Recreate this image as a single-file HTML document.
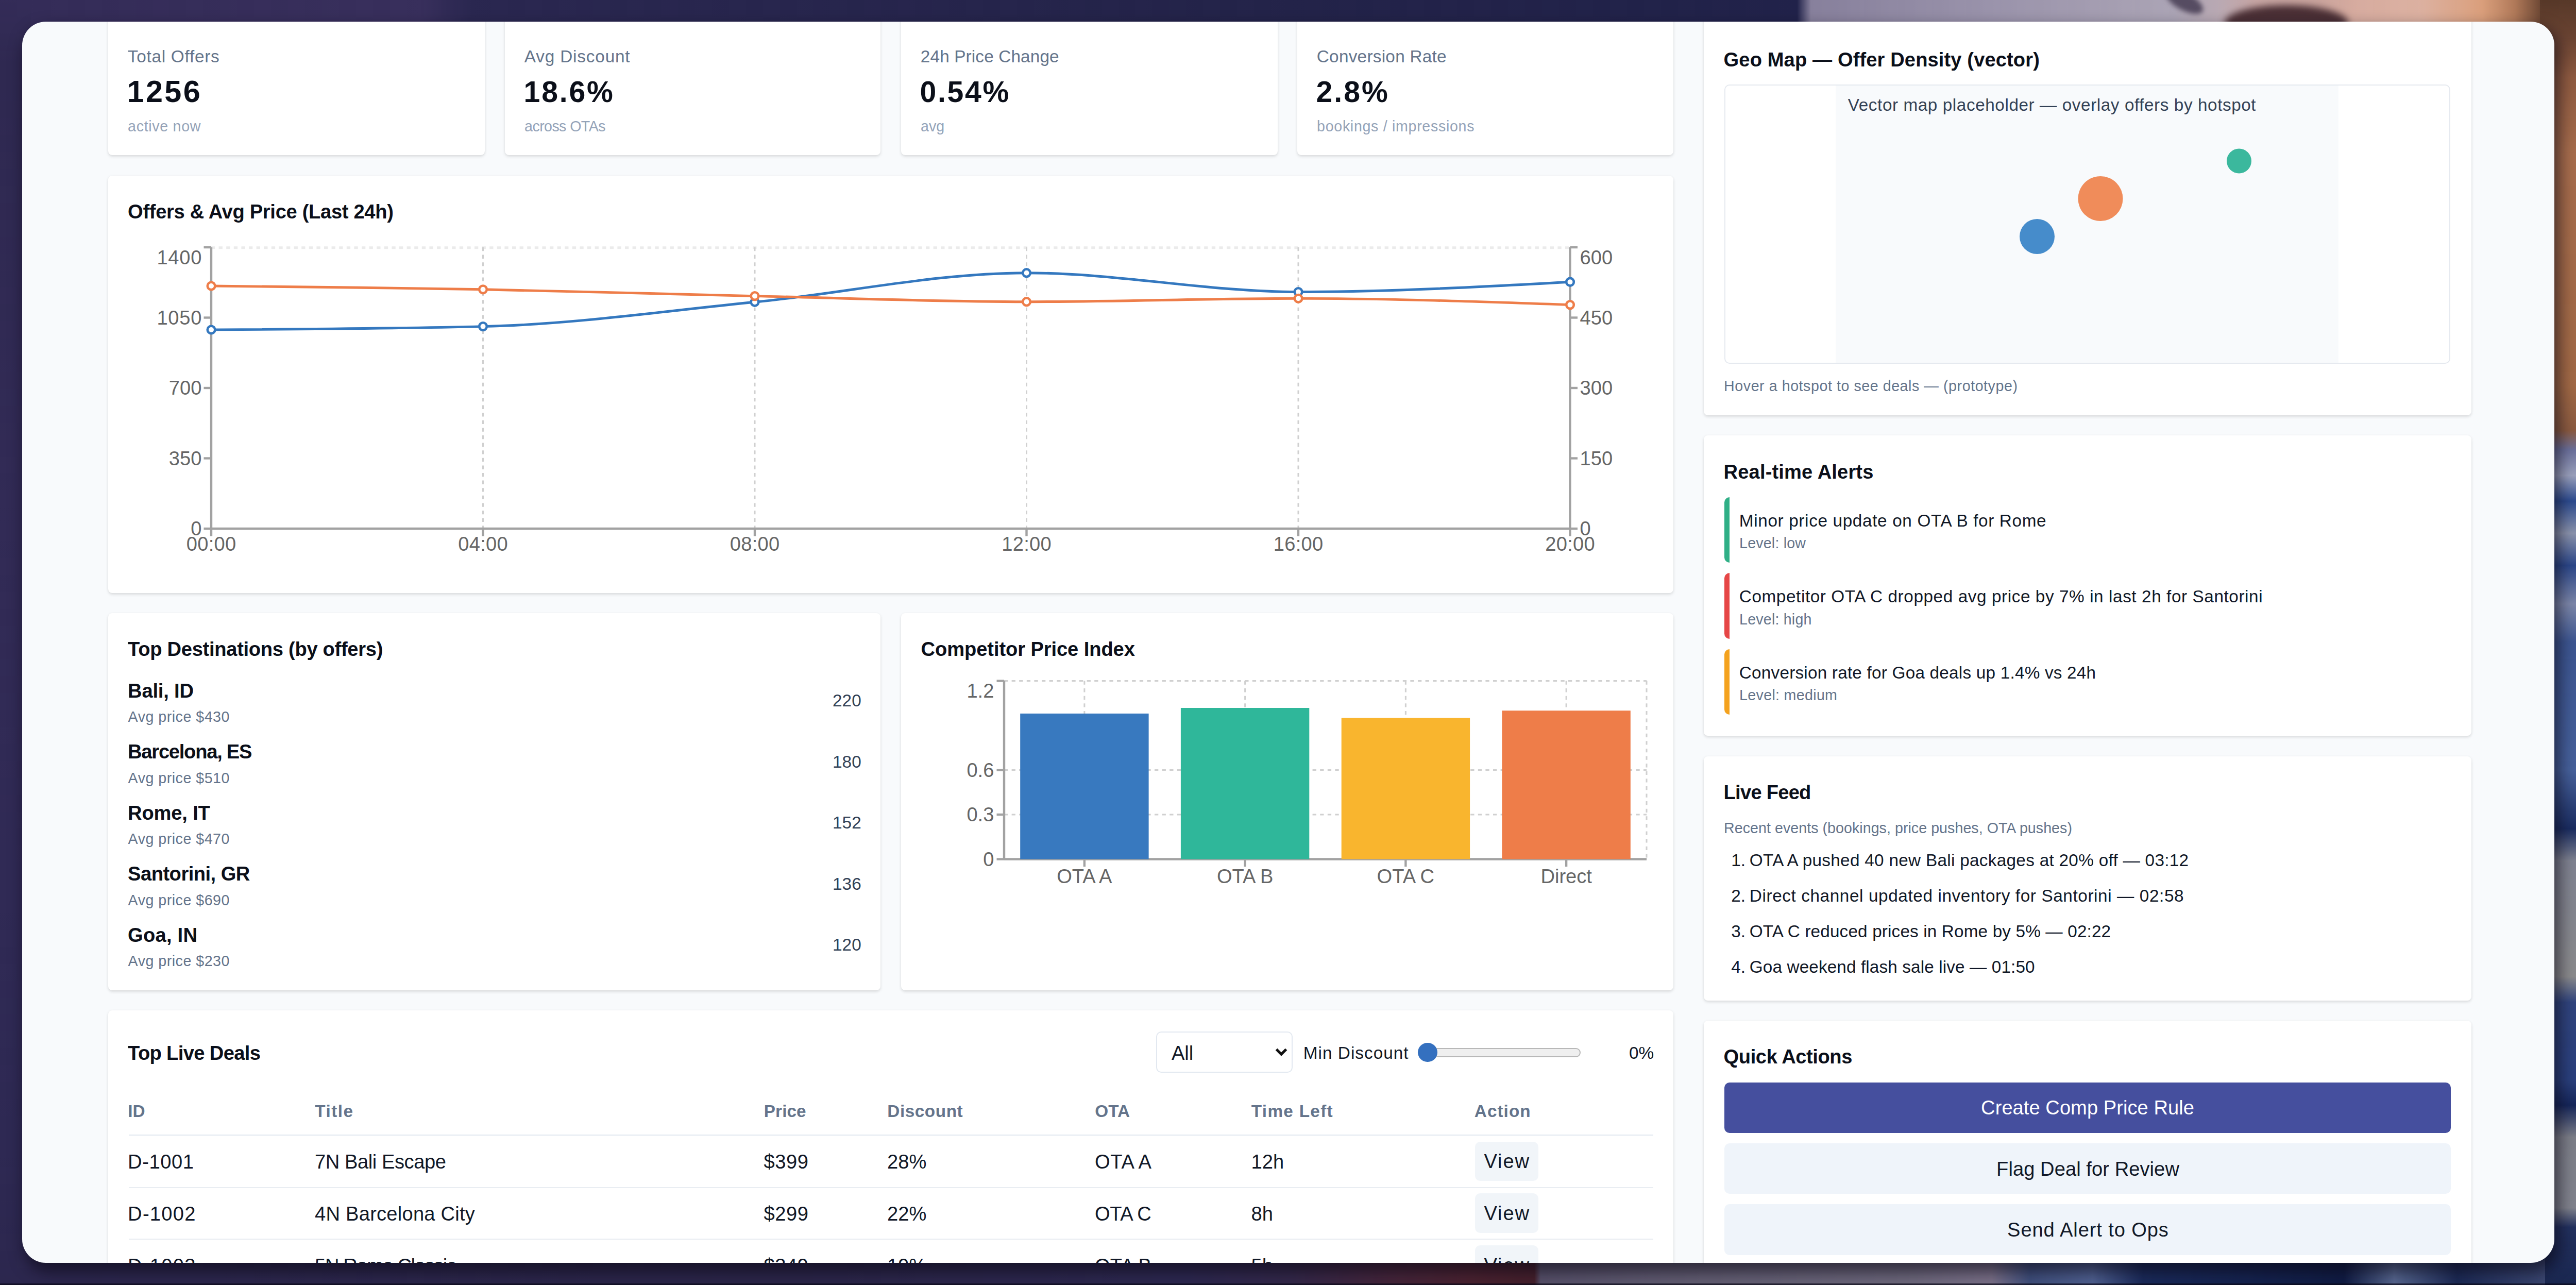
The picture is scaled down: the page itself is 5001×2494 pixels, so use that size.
<!DOCTYPE html>
<html lang="en"><head><meta charset="utf-8"><title>Travel Deals Dashboard</title>
<style>
html,body{margin:0;padding:0}
body{width:5001px;height:2494px;overflow:hidden;position:relative;background:#2b2750;font-family:"Liberation Sans",sans-serif}
.s{position:absolute}
.panel{position:absolute;left:43px;top:42px;width:4915px;height:2409px;border-radius:46px;background:#f8fafc;overflow:hidden;box-shadow:7px 15px 30px 2px rgba(10,6,20,.62)}
.in{position:absolute;left:-43px;top:-42px;width:5001px;height:2494px}
.card{position:absolute;background:#fff;border-radius:8px;box-shadow:0 2.4px 6px rgba(0,0,0,.09),0 2px 4px rgba(0,0,0,.05)}
.t{position:absolute;white-space:pre;line-height:1}
svg.ov{position:absolute;left:0;top:0}
.g{stroke:#d0d0d0;stroke-width:3;stroke-dasharray:7.3 7.3;fill:none}
.gt{stroke:#ebebeb;stroke-width:5;stroke-dasharray:7.3 7.3;fill:none}
.a{stroke:#a2a2a2;stroke-width:4.4;fill:none}
.mapbox{position:absolute;box-sizing:border-box;border:2.4px solid #e5e9ef;border-radius:10px;background:#fff;overflow:hidden}
.abar{position:absolute;width:10px;height:127.5px;border-radius:10px 0 0 10px}
.btn{position:absolute;border-radius:10px}
.btn2{position:absolute;border-radius:10px;background:#f1f5f9}
.sel{position:absolute;box-sizing:border-box;border:2.4px solid #e2e8f0;border-radius:10px;background:#fff}
.track{position:absolute;box-sizing:border-box;border:2.4px solid #b8b8b8;border-radius:10px;background:#efefef}
.thumb{position:absolute;border-radius:50%;background:#3470bf}
.hl{position:absolute}
</style></head>
<body>

<div class="s" style="left:0;top:0;width:70px;height:2494px;background:linear-gradient(180deg,#342c58 0,#2f2951 5%,#322b56 40%,#302a55 70%,#2e2953 90%,#2c274e 100%)"></div>
<div class="s" style="left:60px;top:0;width:4880px;height:60px;background:linear-gradient(90deg,#342c58 0,#382f5c 15.5%,#2a2750 17.5%,#232349 50%,#21224a 70.25%,#87809c 70.8%,#9a93ab 78%,#aba4b5 85.2%,#b9a9b3 87%,#c6a5a3 88.5%,#c9a39c 91%,#d6ab9f 92.4%,#dcb1a1 95%,#da9f7c 97.5%,#b07959 98.8%,#623f2e 100%)"></div>
<div class="s" style="left:4318px;top:10px;width:240px;height:70px;border-radius:50%;background:#4a2f35;filter:blur(7px)"></div>
<div class="s" style="left:4200px;top:-14px;width:80px;height:34px;border-radius:50%;background:#564c62;filter:blur(5px);transform:rotate(28deg)"></div>
<div class="s" style="left:4930px;top:0;width:71px;height:2494px;background:linear-gradient(180deg,#573828 0,#6b4433 3%,#8e5a40 6%,#a66c4c 12%,#a06845 30%,#8a5a40 33.5%,#6a6f9a 35%,#9aa0bc 37%,#2c4a8e 39%,#8b93ac 41.5%,#2b4688 44%,#7c86a8 47%,#3c5590 50%,#46609a 60%,#1a2c60 64.5%,#7f8290 67%,#8a8a8c 76%,#30447d 78%,#2a3f7c 84%,#16265a 86%,#7c7e88 88.5%,#80828c 94%,#22305e 95.5%,#1a2750 100%)"></div>
<div class="s" style="left:60px;top:2430px;width:4880px;height:64px;background:linear-gradient(90deg,#2c274e 0,#2b2649 30%,#2d2850 45.9%,#33284a 50%,#45253a 54.1%,#4a2230 57.2%,#45202c 59.8%,#57516a 60.05%,#625d72 66%,#6d687c 74.6%,#7a7088 78%,#3f4f7c 79.5%,#4f6090 82%,#1a2a5a 84%,#101c44 92%,#56668f 94%,#1c2a55 96.5%,#3a4670 100%)"></div>
<div class="s" style="left:0;top:2491px;width:5001px;height:3px;background:rgba(10,8,24,.7)"></div>
<div class="panel"><div class="in">
<div class="card" style="left:210px;top:-20px;width:731px;height:321px"></div>
<div class="card" style="left:980px;top:-20px;width:729px;height:321px"></div>
<div class="card" style="left:1749px;top:-20px;width:731px;height:321px"></div>
<div class="card" style="left:2518px;top:-20px;width:730px;height:321px"></div>
<div class="card" style="left:210px;top:341px;width:3038px;height:810px"></div>
<div class="card" style="left:210px;top:1190px;width:1499px;height:732px"></div>
<div class="card" style="left:1749px;top:1190px;width:1499px;height:732px"></div>
<div class="card" style="left:210px;top:1961px;width:3038px;height:639px"></div>
<div class="card" style="left:3307px;top:-20px;width:1490px;height:825.5px"></div>
<div class="card" style="left:3307px;top:844.5px;width:1490px;height:583.5px"></div>
<div class="card" style="left:3307px;top:1468px;width:1490px;height:474px"></div>
<div class="card" style="left:3307px;top:1981px;width:1490px;height:619px"></div>
<div class="mapbox" style="left:3347px;top:164px;width:1409px;height:541.5px"><div style="position:absolute;left:214px;top:0;width:976px;height:100%;background:#f8fafc"></div></div>
<div class="abar" style="left:3347px;top:964.5px;background:#2faf86"></div>
<div class="abar" style="left:3347px;top:1112.0px;background:#e64646"></div>
<div class="abar" style="left:3347px;top:1259.5px;background:#f4a21e"></div>
<div class="btn" style="left:3347px;top:2100.5px;width:1409.5px;height:98px;background:#454f9e"></div>
<div class="btn" style="left:3347px;top:2218.5px;width:1409.5px;height:98.5px;background:#eff4fa"></div>
<div class="btn" style="left:3347px;top:2337px;width:1409.5px;height:98.5px;background:#eff4fa"></div>
<div class="sel" style="left:2244px;top:2002px;width:265px;height:79.5px"></div>
<div class="track" style="left:2752px;top:2033.5px;width:316px;height:18.6px"></div>
<div class="thumb" style="left:2752px;top:2023.8px;width:37.7px;height:37.7px"></div>
<div class="hl" style="left:250px;top:2201.8px;width:2958.5px;height:2.5px;background:#e2e8f0"></div>
<div class="btn2" style="left:2862.5px;top:2215.5px;width:123.5px;height:76.5px"></div>
<div class="hl" style="left:250px;top:2303.5px;width:2958.5px;height:2px;background:#e9edf2"></div>
<div class="btn2" style="left:2862.5px;top:2316.2px;width:123.5px;height:76.5px"></div>
<div class="hl" style="left:250px;top:2404.2px;width:2958.5px;height:2px;background:#e9edf2"></div>
<div class="btn2" style="left:2862.5px;top:2416.9px;width:123.5px;height:76.5px"></div>
<div class="hl" style="left:250px;top:2504.9px;width:2958.5px;height:2px;background:#e9edf2"></div>
<svg class="ov" width="5001" height="2494" viewBox="0 0 5001 2494">
<line x1="410" y1="480.8" x2="3047.5" y2="480.8" class="gt"/>
<line x1="410.0" y1="480" x2="410.0" y2="1026" class="g"/>
<line x1="937.5" y1="480" x2="937.5" y2="1026" class="g"/>
<line x1="1465.0" y1="480" x2="1465.0" y2="1026" class="g"/>
<line x1="1992.5" y1="480" x2="1992.5" y2="1026" class="g"/>
<line x1="2520.0" y1="480" x2="2520.0" y2="1026" class="g"/>
<line x1="3047.5" y1="480" x2="3047.5" y2="1026" class="g"/>
<line x1="410" y1="1026" x2="3047.5" y2="1026" class="g"/>
<line x1="410" y1="480" x2="410" y2="1026" class="a"/>
<line x1="3047.5" y1="480" x2="3047.5" y2="1026" class="a"/>
<line x1="410" y1="1026" x2="3047.5" y2="1026" class="a"/>
<line x1="395.5" y1="480.0" x2="410" y2="480.0" class="a"/>
<line x1="3047.5" y1="480.0" x2="3062.0" y2="480.0" class="a"/>
<line x1="395.5" y1="616.5" x2="410" y2="616.5" class="a"/>
<line x1="3047.5" y1="616.5" x2="3062.0" y2="616.5" class="a"/>
<line x1="395.5" y1="753.0" x2="410" y2="753.0" class="a"/>
<line x1="3047.5" y1="753.0" x2="3062.0" y2="753.0" class="a"/>
<line x1="395.5" y1="889.5" x2="410" y2="889.5" class="a"/>
<line x1="3047.5" y1="889.5" x2="3062.0" y2="889.5" class="a"/>
<line x1="395.5" y1="1026.0" x2="410" y2="1026.0" class="a"/>
<line x1="3047.5" y1="1026.0" x2="3062.0" y2="1026.0" class="a"/>
<line x1="410.0" y1="1026" x2="410.0" y2="1040.5" class="a"/>
<line x1="937.5" y1="1026" x2="937.5" y2="1040.5" class="a"/>
<line x1="1465.0" y1="1026" x2="1465.0" y2="1040.5" class="a"/>
<line x1="1992.5" y1="1026" x2="1992.5" y2="1040.5" class="a"/>
<line x1="2520.0" y1="1026" x2="2520.0" y2="1040.5" class="a"/>
<line x1="3047.5" y1="1026" x2="3047.5" y2="1040.5" class="a"/>
<path d="M410.0,640.0C585.8,638.9,761.7,637.9,937.5,633.6C1113.3,629.3,1289.2,603.6,1465.0,586.3C1640.8,569.0,1816.7,529.7,1992.5,529.7C2168.3,529.7,2344.2,566.5,2520.0,566.5C2695.8,566.5,2871.7,556.9,3047.5,547.2" fill="none" stroke="#3478bf" stroke-width="4.9"/>
<circle cx="410.0" cy="640.0" r="7.3" fill="#fff" stroke="#3478bf" stroke-width="4.6"/>
<circle cx="937.5" cy="633.6" r="7.3" fill="#fff" stroke="#3478bf" stroke-width="4.6"/>
<circle cx="1465.0" cy="586.3" r="7.3" fill="#fff" stroke="#3478bf" stroke-width="4.6"/>
<circle cx="1992.5" cy="529.7" r="7.3" fill="#fff" stroke="#3478bf" stroke-width="4.6"/>
<circle cx="2520.0" cy="566.5" r="7.3" fill="#fff" stroke="#3478bf" stroke-width="4.6"/>
<circle cx="3047.5" cy="547.2" r="7.3" fill="#fff" stroke="#3478bf" stroke-width="4.6"/>
<path d="M410.0,555.0C585.8,556.8,761.7,558.5,937.5,561.8C1113.3,565.1,1289.2,570.6,1465.0,574.6C1640.8,578.6,1816.7,585.7,1992.5,585.7C2168.3,585.7,2344.2,579.3,2520.0,579.3C2695.8,579.3,2871.7,585.4,3047.5,591.6" fill="none" stroke="#ee7d49" stroke-width="4.9"/>
<circle cx="410.0" cy="555.0" r="7.3" fill="#fff" stroke="#ee7d49" stroke-width="4.6"/>
<circle cx="937.5" cy="561.8" r="7.3" fill="#fff" stroke="#ee7d49" stroke-width="4.6"/>
<circle cx="1465.0" cy="574.6" r="7.3" fill="#fff" stroke="#ee7d49" stroke-width="4.6"/>
<circle cx="1992.5" cy="585.7" r="7.3" fill="#fff" stroke="#ee7d49" stroke-width="4.6"/>
<circle cx="2520.0" cy="579.3" r="7.3" fill="#fff" stroke="#ee7d49" stroke-width="4.6"/>
<circle cx="3047.5" cy="591.6" r="7.3" fill="#fff" stroke="#ee7d49" stroke-width="4.6"/>
<line x1="1949" y1="1321.5" x2="3196" y2="1321.5" class="g"/>
<line x1="1949" y1="1494.5" x2="3196" y2="1494.5" class="g"/>
<line x1="1949" y1="1581.0" x2="3196" y2="1581.0" class="g"/>
<line x1="2104.875" y1="1321.5" x2="2104.875" y2="1667.5" class="g"/>
<line x1="2416.625" y1="1321.5" x2="2416.625" y2="1667.5" class="g"/>
<line x1="2728.375" y1="1321.5" x2="2728.375" y2="1667.5" class="g"/>
<line x1="3040.125" y1="1321.5" x2="3040.125" y2="1667.5" class="g"/>
<line x1="3196" y1="1321.5" x2="3196" y2="1667.5" class="g"/>
<line x1="1949" y1="1321.5" x2="1949" y2="1667.5" class="a"/>
<line x1="1949" y1="1667.5" x2="3196" y2="1667.5" class="a"/>
<line x1="1934.5" y1="1321.5" x2="1949" y2="1321.5" class="a"/>
<line x1="1934.5" y1="1494.5" x2="1949" y2="1494.5" class="a"/>
<line x1="1934.5" y1="1581.0" x2="1949" y2="1581.0" class="a"/>
<line x1="1934.5" y1="1667.5" x2="1949" y2="1667.5" class="a"/>
<line x1="2104.875" y1="1667.5" x2="2104.875" y2="1682.0" class="a"/>
<rect x="1980.2" y="1384.9" width="249.4" height="282.6" fill="#3879bf"/>
<line x1="2416.625" y1="1667.5" x2="2416.625" y2="1682.0" class="a"/>
<rect x="2291.9" y="1374.0" width="249.4" height="293.5" fill="#2fb79a"/>
<line x1="2728.375" y1="1667.5" x2="2728.375" y2="1682.0" class="a"/>
<rect x="2603.7" y="1393.0" width="249.4" height="274.5" fill="#f9b52e"/>
<line x1="3040.125" y1="1667.5" x2="3040.125" y2="1682.0" class="a"/>
<rect x="2915.4" y="1379.2" width="249.4" height="288.3" fill="#ee7d49"/>
<circle cx="4346" cy="312.5" r="24" fill="#3bb89d"/>
<circle cx="4077" cy="385.5" r="43.5" fill="#f08c5a"/>
<circle cx="3954" cy="459" r="34" fill="#468ccb"/>
<path d="M2477.5,2036.5L2487,2046L2496.5,2036.5" fill="none" stroke="#111" stroke-width="5.2"/>
</svg>
<span class="t" style="left:247.8px;top:92.8px;font-size:33.32px;color:#64748b;letter-spacing:0.738px">Total Offers</span>
<span class="t" style="left:246.5px;top:147.8px;font-size:59.31px;color:#0b0f19;font-weight:700;letter-spacing:3.428px">1256</span>
<span class="t" style="left:248.1px;top:230.8px;font-size:28.62px;color:#94a3b8;letter-spacing:0.688px">active now</span>
<span class="t" style="left:1017.8px;top:92.8px;font-size:33.32px;color:#64748b;letter-spacing:0.833px">Avg Discount</span>
<span class="t" style="left:1016.6px;top:149.6px;font-size:57.13px;color:#0b0f19;font-weight:700;letter-spacing:2.807px">18.6%</span>
<span class="t" style="left:1018.1px;top:230.8px;font-size:28.62px;color:#94a3b8;letter-spacing:-0.586px">across OTAs</span>
<span class="t" style="left:1786.8px;top:92.8px;font-size:33.32px;color:#64748b;letter-spacing:0.143px">24h Price Change</span>
<span class="t" style="left:1785.6px;top:149.6px;font-size:57.13px;color:#0b0f19;font-weight:700;letter-spacing:2.682px">0.54%</span>
<span class="t" style="left:1787.1px;top:230.8px;font-size:28.62px;color:#94a3b8">avg</span>
<span class="t" style="left:2555.8px;top:92.8px;font-size:33.32px;color:#64748b;letter-spacing:0.265px">Conversion Rate</span>
<span class="t" style="left:2554.6px;top:149.6px;font-size:57.13px;color:#0b0f19;font-weight:700;letter-spacing:2.998px">2.8%</span>
<span class="t" style="left:2556.1px;top:230.8px;font-size:28.62px;color:#94a3b8;letter-spacing:0.684px">bookings / impressions</span>
<span class="t" style="left:248.1px;top:392.4px;font-size:38.12px;color:#0b0f19;font-weight:700;letter-spacing:-0.311px">Offers &amp; Avg Price (Last 24h)</span>
<span class="t" style="left:248.1px;top:1240.7px;font-size:38.12px;color:#0b0f19;font-weight:700;letter-spacing:-0.292px">Top Destinations (by offers)</span>
<span class="t" style="left:1787.6px;top:1240.7px;font-size:38.12px;color:#0b0f19;font-weight:700;letter-spacing:-0.089px">Competitor Price Index</span>
<span class="t" style="left:248.1px;top:2024.7px;font-size:38.12px;color:#0b0f19;font-weight:700;letter-spacing:-0.641px">Top Live Deals</span>
<span class="t" style="left:3345.6px;top:96.7px;font-size:38.12px;color:#0b0f19;font-weight:700;letter-spacing:0.111px">Geo Map — Offer Density (vector)</span>
<span class="t" style="left:3345.6px;top:897.2px;font-size:38.12px;color:#0b0f19;font-weight:700;letter-spacing:0.137px">Real-time Alerts</span>
<span class="t" style="left:3345.6px;top:1519.2px;font-size:38.12px;color:#0b0f19;font-weight:700;letter-spacing:-0.748px">Live Feed</span>
<span class="t" style="left:3345.6px;top:2032.2px;font-size:38.12px;color:#0b0f19;font-weight:700;letter-spacing:-0.418px">Quick Actions</span>
<span class="t" style="left:304.4px;top:481.2px;font-size:38.12px;color:#666666;letter-spacing:0.744px">1400</span>
<span class="t" style="left:304.4px;top:597.7px;font-size:38.12px;color:#666666;letter-spacing:0.744px">1050</span>
<span class="t" style="left:327.8px;top:734.2px;font-size:38.12px;color:#666666">700</span>
<span class="t" style="left:327.8px;top:870.7px;font-size:38.12px;color:#666666">350</span>
<span class="t" style="left:370.2px;top:1007.2px;font-size:38.12px;color:#666666">0</span>
<span class="t" style="left:3066.6px;top:481.2px;font-size:38.12px;color:#666666">600</span>
<span class="t" style="left:3066.6px;top:597.7px;font-size:38.12px;color:#666666">450</span>
<span class="t" style="left:3066.6px;top:734.2px;font-size:38.12px;color:#666666">300</span>
<span class="t" style="left:3066.6px;top:870.7px;font-size:38.12px;color:#666666">150</span>
<span class="t" style="left:3066.6px;top:1007.2px;font-size:38.12px;color:#666666">0</span>
<span class="t" style="left:361.8px;top:1037.2px;font-size:38.12px;color:#666666;letter-spacing:0.234px">00:00</span>
<span class="t" style="left:889.3px;top:1037.2px;font-size:38.12px;color:#666666;letter-spacing:0.234px">04:00</span>
<span class="t" style="left:1416.8px;top:1037.2px;font-size:38.12px;color:#666666;letter-spacing:0.234px">08:00</span>
<span class="t" style="left:1944.3px;top:1037.2px;font-size:38.12px;color:#666666;letter-spacing:0.234px">12:00</span>
<span class="t" style="left:2471.8px;top:1037.2px;font-size:38.12px;color:#666666;letter-spacing:0.234px">16:00</span>
<span class="t" style="left:2999.3px;top:1037.2px;font-size:38.12px;color:#666666;letter-spacing:0.234px">20:00</span>
<span class="t" style="left:2051.2px;top:1681.7px;font-size:38.12px;color:#666666">OTA A</span>
<span class="t" style="left:2361.9px;top:1681.7px;font-size:38.12px;color:#666666">OTA B</span>
<span class="t" style="left:2672.6px;top:1681.7px;font-size:38.12px;color:#666666">OTA C</span>
<span class="t" style="left:2990.4px;top:1681.7px;font-size:38.12px;color:#666666">Direct</span>
<span class="t" style="left:1876.4px;top:1321.7px;font-size:38.12px;color:#666666">1.2</span>
<span class="t" style="left:1876.4px;top:1475.7px;font-size:38.12px;color:#666666">0.6</span>
<span class="t" style="left:1876.4px;top:1562.2px;font-size:38.12px;color:#666666">0.3</span>
<span class="t" style="left:1908.2px;top:1648.7px;font-size:38.12px;color:#666666">0</span>
<span class="t" style="left:248.1px;top:1321.7px;font-size:38.12px;color:#0b0f19;font-weight:700;letter-spacing:-0.196px">Bali, ID</span>
<span class="t" style="left:248.6px;top:1377.3px;font-size:28.62px;color:#64748b;letter-spacing:0.501px">Avg price $430</span>
<span class="t" style="left:1616.1px;top:1343.3px;font-size:33.32px;color:#334155">220</span>
<span class="t" style="left:248.1px;top:1440.2px;font-size:38.12px;color:#0b0f19;font-weight:700;letter-spacing:-1.249px">Barcelona, ES</span>
<span class="t" style="left:248.6px;top:1495.8px;font-size:28.62px;color:#64748b;letter-spacing:0.501px">Avg price $510</span>
<span class="t" style="left:1616.1px;top:1461.8px;font-size:33.32px;color:#334155">180</span>
<span class="t" style="left:248.1px;top:1558.7px;font-size:38.12px;color:#0b0f19;font-weight:700;letter-spacing:-0.161px">Rome, IT</span>
<span class="t" style="left:248.6px;top:1614.3px;font-size:28.62px;color:#64748b;letter-spacing:0.501px">Avg price $470</span>
<span class="t" style="left:1616.1px;top:1580.3px;font-size:33.32px;color:#334155">152</span>
<span class="t" style="left:248.1px;top:1677.2px;font-size:38.12px;color:#0b0f19;font-weight:700;letter-spacing:-0.516px">Santorini, GR</span>
<span class="t" style="left:248.6px;top:1732.8px;font-size:28.62px;color:#64748b;letter-spacing:0.501px">Avg price $690</span>
<span class="t" style="left:1616.1px;top:1698.8px;font-size:33.32px;color:#334155">136</span>
<span class="t" style="left:248.1px;top:1795.7px;font-size:38.12px;color:#0b0f19;font-weight:700;letter-spacing:0.234px">Goa, IN</span>
<span class="t" style="left:248.6px;top:1851.3px;font-size:28.62px;color:#64748b;letter-spacing:0.501px">Avg price $230</span>
<span class="t" style="left:1616.1px;top:1817.3px;font-size:33.32px;color:#334155">120</span>
<span class="t" style="left:3586.8px;top:186.8px;font-size:33.32px;color:#334155;letter-spacing:0.565px">Vector map placeholder — overlay offers by hotspot</span>
<span class="t" style="left:3346.1px;top:735.3px;font-size:28.62px;color:#64748b;letter-spacing:0.556px">Hover a hotspot to see deals — (prototype)</span>
<span class="t" style="left:3375.8px;top:993.8px;font-size:33.32px;color:#111827;letter-spacing:0.642px">Minor price update on OTA B for Rome</span>
<span class="t" style="left:3376.1px;top:1040.3px;font-size:28.62px;color:#64748b;letter-spacing:0.181px">Level: low</span>
<span class="t" style="left:3375.8px;top:1141.3px;font-size:33.32px;color:#111827;letter-spacing:0.577px">Competitor OTA C dropped avg price by 7% in last 2h for Santorini</span>
<span class="t" style="left:3376.1px;top:1187.8px;font-size:28.62px;color:#64748b;letter-spacing:0.197px">Level: high</span>
<span class="t" style="left:3375.8px;top:1288.8px;font-size:33.32px;color:#111827;letter-spacing:0.210px">Conversion rate for Goa deals up 1.4% vs 24h</span>
<span class="t" style="left:3376.1px;top:1335.3px;font-size:28.62px;color:#64748b;letter-spacing:0.318px">Level: medium</span>
<span class="t" style="left:3346.1px;top:1593.3px;font-size:28.62px;color:#64748b;letter-spacing:0.043px">Recent events (bookings, price pushes, OTA pushes)</span>
<span class="t" style="left:3360.3px;top:1653.3px;font-size:33.32px;color:#111827">1.</span>
<span class="t" style="left:3395.8px;top:1653.3px;font-size:33.32px;color:#111827;letter-spacing:0.287px">OTA A pushed 40 new Bali packages at 20% off — 03:12</span>
<span class="t" style="left:3360.3px;top:1722.3px;font-size:33.32px;color:#111827">2.</span>
<span class="t" style="left:3395.8px;top:1722.3px;font-size:33.32px;color:#111827;letter-spacing:0.599px">Direct channel updated inventory for Santorini — 02:58</span>
<span class="t" style="left:3360.3px;top:1791.3px;font-size:33.32px;color:#111827">3.</span>
<span class="t" style="left:3395.8px;top:1791.3px;font-size:33.32px;color:#111827;letter-spacing:0.141px">OTA C reduced prices in Rome by 5% — 02:22</span>
<span class="t" style="left:3360.3px;top:1860.3px;font-size:33.32px;color:#111827">4.</span>
<span class="t" style="left:3395.8px;top:1860.3px;font-size:33.32px;color:#111827;letter-spacing:0.113px">Goa weekend flash sale live — 01:50</span>
<span class="t" style="left:3845.1px;top:2130.7px;font-size:38.12px;color:#ffffff;letter-spacing:0.038px">Create Comp Price Rule</span>
<span class="t" style="left:3875.1px;top:2249.7px;font-size:38.12px;color:#111827;letter-spacing:0.058px">Flag Deal for Review</span>
<span class="t" style="left:3896.1px;top:2368.2px;font-size:38.12px;color:#111827;letter-spacing:0.882px">Send Alert to Ops</span>
<span class="t" style="left:2273.9px;top:2024.5px;font-size:38.12px;color:#111827">All</span>
<span class="t" style="left:2529.8px;top:2027.3px;font-size:33.32px;color:#111827;letter-spacing:1.026px">Min Discount</span>
<span class="t" style="left:3162.0px;top:2027.3px;font-size:33.32px;color:#111827">0%</span>
<span class="t" style="left:248.3px;top:2139.8px;font-size:33.32px;color:#64748b;font-weight:700">ID</span>
<span class="t" style="left:611.3px;top:2139.8px;font-size:33.32px;color:#64748b;font-weight:700;letter-spacing:1.485px">Title</span>
<span class="t" style="left:1482.8px;top:2139.8px;font-size:33.32px;color:#64748b;font-weight:700;letter-spacing:0.083px">Price</span>
<span class="t" style="left:1722.3px;top:2139.8px;font-size:33.32px;color:#64748b;font-weight:700;letter-spacing:0.545px">Discount</span>
<span class="t" style="left:2125.3px;top:2139.8px;font-size:33.32px;color:#64748b;font-weight:700">OTA</span>
<span class="t" style="left:2428.8px;top:2139.8px;font-size:33.32px;color:#64748b;font-weight:700;letter-spacing:1.295px">Time Left</span>
<span class="t" style="left:2861.8px;top:2139.8px;font-size:33.32px;color:#64748b;font-weight:700;letter-spacing:1.038px">Action</span>
<span class="t" style="left:248.1px;top:2235.7px;font-size:38.12px;color:#111827;letter-spacing:0.562px">D-1001</span>
<span class="t" style="left:611.1px;top:2235.7px;font-size:38.12px;color:#111827;letter-spacing:-0.442px">7N Bali Escape</span>
<span class="t" style="left:1482.6px;top:2235.7px;font-size:38.12px;color:#111827;letter-spacing:0.510px">$399</span>
<span class="t" style="left:1722.1px;top:2235.7px;font-size:38.12px;color:#111827">28%</span>
<span class="t" style="left:2125.1px;top:2235.7px;font-size:38.12px;color:#111827;letter-spacing:0.625px">OTA A</span>
<span class="t" style="left:2428.6px;top:2235.7px;font-size:38.12px;color:#111827">12h</span>
<span class="t" style="left:2880.6px;top:2234.7px;font-size:38.12px;color:#111827;letter-spacing:1.797px">View</span>
<span class="t" style="left:248.1px;top:2336.7px;font-size:38.12px;color:#111827;letter-spacing:1.262px">D-1002</span>
<span class="t" style="left:611.1px;top:2336.7px;font-size:38.12px;color:#111827;letter-spacing:0.229px">4N Barcelona City</span>
<span class="t" style="left:1482.6px;top:2336.7px;font-size:38.12px;color:#111827;letter-spacing:0.510px">$299</span>
<span class="t" style="left:1722.1px;top:2336.7px;font-size:38.12px;color:#111827">22%</span>
<span class="t" style="left:2125.1px;top:2336.7px;font-size:38.12px;color:#111827;letter-spacing:-0.430px">OTA C</span>
<span class="t" style="left:2428.6px;top:2336.7px;font-size:38.12px;color:#111827">8h</span>
<span class="t" style="left:2880.6px;top:2335.7px;font-size:38.12px;color:#111827;letter-spacing:1.797px">View</span>
<span class="t" style="left:248.1px;top:2437.7px;font-size:38.12px;color:#111827;letter-spacing:1.262px">D-1003</span>
<span class="t" style="left:611.1px;top:2437.7px;font-size:38.12px;color:#111827;letter-spacing:-1.397px">5N Rome Classic</span>
<span class="t" style="left:1482.6px;top:2437.7px;font-size:38.12px;color:#111827;letter-spacing:0.510px">$349</span>
<span class="t" style="left:1722.1px;top:2437.7px;font-size:38.12px;color:#111827">19%</span>
<span class="t" style="left:2125.1px;top:2437.7px;font-size:38.12px;color:#111827;letter-spacing:0.098px">OTA B</span>
<span class="t" style="left:2428.6px;top:2437.7px;font-size:38.12px;color:#111827">5h</span>
<span class="t" style="left:2880.6px;top:2436.7px;font-size:38.12px;color:#111827;letter-spacing:1.797px">View</span>
</div></div>
</body></html>
